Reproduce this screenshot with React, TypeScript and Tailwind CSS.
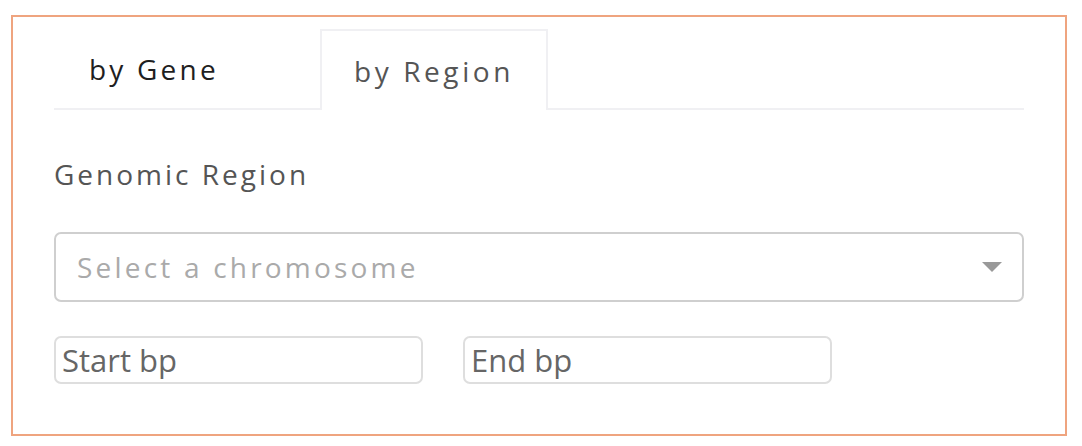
export default function App() {
  return (
    <div className="min-h-screen bg-white pt-[15px] pl-[11px]" style={{ fontFamily: '"Open Sans", sans-serif' }}>
      <div className="w-[1056px] h-[421px] border-2 border-[#efa47f] px-[41px] pt-[12px]">
        <div className="flex h-[81px] border-b-2 border-[#f0f0f3]">
          <div className="w-[266px] pl-[35px] pt-[1px] flex items-center text-[28px] tracking-[3.2px] text-[#1f1f1f]">
            by Gene
          </div>
          <div className="-mb-[2px] w-[228px] flex items-center justify-center border-2 border-b-0 border-[#f0f0f3] bg-white text-[28px] tracking-[3.6px] text-[#555]">
            by Region
          </div>
        </div>

        <div className="mt-[47px] text-[28px] tracking-[3px] text-[#555] leading-[34px]">Genomic Region</div>

        <div className="mt-[41px] h-[70px] rounded-[7px] border-2 border-[#cfcfcf] flex items-center justify-between pl-[21px] pr-[20px]">
          <span className="text-[28px] tracking-[3.2px] text-[#aaa]">Select a chromosome</span>
          <svg width="20" height="10" viewBox="0 0 20 10">
            <path d="M0 0 L20 0 L10 10 Z" fill="#999" />
          </svg>
        </div>

        <div className="mt-[34px] flex gap-[40px]">
          <input
            placeholder="Start bp"
            className="w-[369px] h-[48px] rounded-[7px] border-2 border-[#dedede] px-[6px] text-[31px] text-[#666] placeholder:text-[#666] outline-none"
          />
          <input
            placeholder="End bp"
            className="w-[369px] h-[48px] rounded-[7px] border-2 border-[#dedede] px-[6px] text-[31px] text-[#666] placeholder:text-[#666] outline-none"
          />
        </div>
      </div>
    </div>
  );
}
